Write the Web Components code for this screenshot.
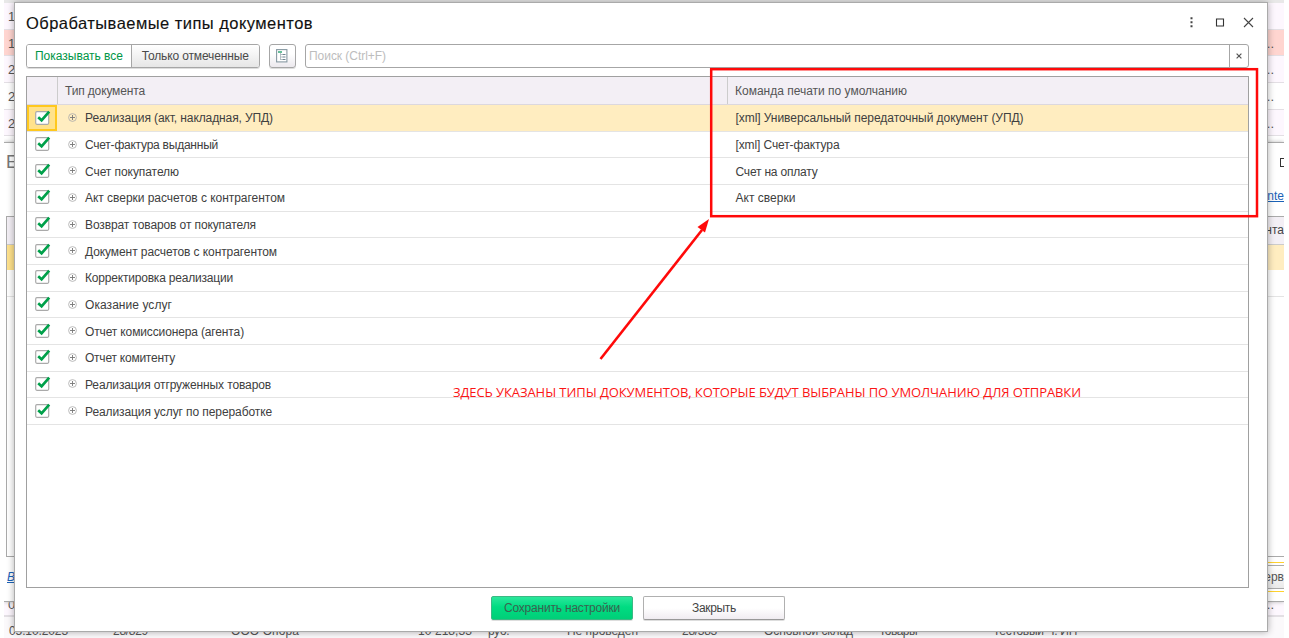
<!DOCTYPE html>
<html lang="ru">
<head>
<meta charset="utf-8">
<title>Обрабатываемые типы документов</title>
<style>
html,body{margin:0;padding:0;background:#fff;overflow:hidden}
body{width:1289px;height:638px;font:12px/16px "Liberation Sans",Arial,sans-serif;color:#444}
</style>
</head>
<body>
<app-desktop></app-desktop>
<script>
const define=(name,html,init)=>customElements.define(name,class extends HTMLElement{
  constructor(){super();this.attachShadow({mode:'open'}).innerHTML=typeof html==='function'?'':html;}
  connectedCallback(){if(typeof html==='function')this.shadowRoot.innerHTML=html(this);if(init)init(this);}
});

/* Text run whose tracking is adjusted to occupy the width given in "w". */
define('fit-text','<style>:host{display:inline-block;white-space:pre;flex:none}span{display:inline-block}</style><span><slot></slot></span>',el=>{
  const s=el.shadowRoot.querySelector('span');
  const fit=()=>{
    s.style.letterSpacing='0px';
    const n=el.textContent.length,w=+el.getAttribute('w'),nat=s.getBoundingClientRect().width;
    if(!n||!w||!nat)return;
    const ls=(w-nat)/n;
    s.style.letterSpacing=ls+'px';
  };
  fit();requestAnimationFrame(fit);
});

define('check-box',`<style>:host{display:block;width:16px;height:16px}svg{display:block}</style>
<svg width="16" height="16" viewBox="0 0 16 16"><rect x=".7" y="1.7" width="13" height="12.6" rx="1.2" fill="#fff" stroke="#aaa" stroke-width="1.2"/><path d="M3.2 7.2 6.6 10.3 14.2 1.6" fill="none" stroke="#00a04a" stroke-width="2.7"/></svg>`);

define('expand-mark',`<style>:host{display:block;width:9px;height:9px}svg{display:block}</style>
<svg width="9" height="9" viewBox="0 0 9 9" fill="none" stroke="#999"><circle cx="4.5" cy="4.5" r="3.9" stroke="#aaa" stroke-width=".8"/><path d="M2 4.5H7M4.5 2V7" stroke="#777" stroke-width=".9"/></svg>`);

define('doc-row',el=>`<style>
:host{display:grid;grid-template-columns:30px 670px 1fr;height:26.66px;box-sizing:border-box;border-bottom:1px solid #e4e4e4;color:#404040;flex:none}
:host([selected]){background:#ffedc0}
.c{padding:4.2px 0 0 8px;box-sizing:border-box}
:host([selected]) .c{background:#ffe28c;border:2px solid #ffc81e;padding:3px 0 0 6px;height:25.6px}
.n{display:flex;align-items:center;padding-left:11px;gap:8px;padding-top:1px}
.n expand-mark{margin-top:-2px}
.p{display:flex;align-items:center;padding-left:8.5px;padding-top:1px}
</style><div class="c"><check-box></check-box></div>
<div class="n"><expand-mark></expand-mark><fit-text w="${el.getAttribute('nw')}">${el.getAttribute('name')}</fit-text></div>
<div class="p">${el.getAttribute('print')?`<fit-text w="${el.getAttribute('pw')}">${el.getAttribute('print')}</fit-text>`:''}</div>`);

const rows=[
['Реализация (акт, накладная, УПД)',188,'[xml] Универсальный передаточный документ (УПД)',288],
['Счет-фактура выданный',133,'[xml] Счет-фактура',104],
['Счет покупателю',94,'Счет на оплату',82],
['Акт сверки расчетов с контрагентом',200,'Акт сверки',60],
['Возврат товаров от покупателя',171],
['Документ расчетов с контрагентом',192],
['Корректировка реализации',148],
['Оказание услуг',87],
['Отчет комиссионера (агента)',159],
['Отчет комитенту',90],
['Реализация отгруженных товаров',186],
['Реализация услуг по переработке',187]];

define('doc-table',`<style>
:host{display:flex;flex-direction:column;border:1px solid #a0a0a0;box-sizing:border-box;background:#fff;overflow:hidden}
.h{display:grid;grid-template-columns:30px 670px 1fr;height:28px;background:#f3eff5;border-bottom:1px solid #dcd8de;box-sizing:border-box;color:#555;margin:0 0 .1px;flex:none}
.h div{display:flex;align-items:center;padding-left:7px;border-left:1px solid #ccc;box-sizing:border-box}
.h div:first-child{border:0}
</style><div class="h"><div></div><div><fit-text w="80">Тип документа</fit-text></div><div><fit-text w="172">Команда печати по умолчанию</fit-text></div></div>
${rows.map((r,i)=>`<doc-row ${i?'':'selected'} name="${r[0]}" nw="${r[1]}" ${r[2]?`print="${r[2]}" pw="${r[3]}"`:''}></doc-row>`).join('')}`);

define('tool-bar',`<style>
:host{display:flex;height:24px;color:#4a4a4a}
.seg{display:flex;width:233.5px;box-sizing:border-box;border:1px solid #a6a6a6;border-radius:3px;box-shadow:0 1px 0 #ddd;overflow:hidden;flex:none}
.seg div{display:flex;align-items:center;justify-content:center}
.a{width:104px;color:#009646;background:#fff}
.b{flex:1;border-left:1px solid #a6a6a6;background:linear-gradient(#fff,#e6e6e6)}
.i{width:27.5px;margin-left:9px;box-sizing:border-box;border:1px solid #a6a6a6;border-radius:3px;background:linear-gradient(#fff 40%,#ece9ee);display:flex;align-items:center;justify-content:center;box-shadow:0 1px 0 #ddd;flex:none}
.s{flex:1;margin-left:9px;border:1px solid #a6a6a6;border-radius:3px;box-sizing:border-box;display:flex;align-items:center;padding-left:3px;color:#bdbdbd;background:#fff}
.x{margin-left:auto;width:18.5px;border-left:1px solid #a6a6a6;align-self:stretch;display:flex;align-items:center;justify-content:center}
</style><div class="seg"><div class="a"><fit-text w="88">Показывать все</fit-text></div><div class="b"><fit-text w="107">Только отмеченные</fit-text></div></div>
<div class="i"><svg width="12" height="14" viewBox="0 0 12 14" fill="none"><rect x=".6" y=".6" width="10.3" height="12.3" fill="#fff" stroke="#8799a3" stroke-width="1.1"/><path d="M2 3h4" stroke="#3fae80" stroke-width="1.6"/><path d="M4.5 4v7M4.5 5.5h2M4.5 8h2M4.5 10.5h2" stroke="#a5b0b6" stroke-width=".8"/><path d="M6.5 5.5h3M6.5 8h3M6.5 10.5h3" stroke="#6e8490" stroke-width="1.1"/></svg></div>
<div class="s"><fit-text w="77">Поиск (Ctrl+F)</fit-text><div class="x"><svg width="6" height="6" viewBox="0 0 6 6"><path d="m.6.6 4.8 4.8M5.4.6.6 5.4" stroke="#555" stroke-width="1.2"/></svg></div></div>`);

define('push-button',`<style>
:host{display:flex;align-items:center;justify-content:center;width:142px;height:24px;box-sizing:border-box;border:1px solid #b0b0b0;border-bottom-color:#999;border-radius:2px;background:linear-gradient(#fff 50%,#f0ecf1);color:#444;box-shadow:0 1px 0 #ddd}
:host([primary]){background:linear-gradient(#2be79b,#00dc82 45%,#00cf78);border-color:#3bb984;color:#3c6250}
</style><slot></slot>`);

define('types-dialog',`<style>
:host{display:flex;flex-direction:column;box-sizing:border-box;background:#fff;border:1px solid #aaa;box-shadow:0 0 7px rgba(0,0,0,.32);padding:0 17.5px 0 11px}
header{display:flex;height:41px;flex:none;align-items:center;color:#111;font-size:16.5px;line-height:20px;padding-bottom:2px;box-sizing:border-box;-webkit-text-stroke:.12px #111}
header svg{margin-left:auto;margin-right:-5px;margin-top:-1px}
doc-table{margin-top:8px;height:512px;flex:none}
footer{display:flex;gap:10px;padding:8px 0 0 465px}
</style><header><fit-text w="287">Обрабатываемые типы документов</fit-text>
<svg width="66" height="14" viewBox="0 0 66 14" fill="none"><path d="M3.5 2.2v2M3.5 6.2v2M3.5 10.2v2" stroke="#444" stroke-width="2"/><path d="M28.5 4h7v7h-7z" stroke="#333" stroke-width="1.1"/><path d="m56 3 9 9M65 3l-9 9" stroke="#444" stroke-width="1.1"/></svg></header>
<tool-bar></tool-bar><doc-table></doc-table>
<footer><push-button primary><fit-text w="116">Сохранить настройки</fit-text></push-button><push-button><fit-text w="44">Закрыть</fit-text></push-button></footer>`);

define('journal-page',`<style>
:host{display:flex;flex-direction:column;box-sizing:border-box;background:#fff;overflow:hidden;color:#555}
.top{height:3px;background:#e8e8e8;flex:none}
.r{display:flex;justify-content:space-between;height:26.7px;flex:none;box-sizing:border-box;border-bottom:1px solid #e3dfe4;background:#fff;padding:6px 10px 0 4px;font-size:13px}
.r.o{background:#fdf7fe}.r.k{background:#ffd5d0}
.gap{height:464.5px;flex:none}
.last{position:relative;height:22px;flex:none;border-top:1px solid #e3dfe4;background:#fbf9fb}
.last fit-text{position:absolute;top:6px}
</style><div class="top"></div>
<div class="r o"><span>1</span></div><div class="r k"><span>1</span><span>..</span></div><div class="r o"><span>2</span><span>..</span></div><div class="r"><span>2</span><span>..</span></div><div class="r o"><span>2</span><span>..</span></div>
<div class="gap"></div><div class="r o" style="height:15px;padding-top:0;line-height:8px"><span>0</span><span>..</span></div>
<div class="last">${[[5,59,'05.10.2023'],[109,35,'28/829'],[227,68,'ООО Опора'],[414,54,'10 218,33'],[484,21,'руб.'],[563,71,'Не проведен'],[678,35,'28/383'],[760,89,'Основной склад'],[875,38,'Товары'],[989,84,'Тестовый Ч. ИП']].map(a=>`<fit-text style="left:${a[0]}px" w="${a[1]}">${a[2]}</fit-text>`).join('')}</div>`);

define('inner-window',`<style>
:host{display:flex;flex-direction:column;box-sizing:border-box;background:#fff;border-top:1px solid #aaa;border-bottom:1px solid #aaa;box-shadow:0 0 4px #bbb;overflow:hidden;clip-path:inset(-5px 0)}
.t{display:flex;justify-content:space-between;height:45px;flex:none;font-size:18px;padding:10px 0 0 2px;box-sizing:border-box;line-height:18px;color:#777}
.t i{width:8px;height:7px;border:1px solid #333;margin:5px -6px 0 0}
.l{height:28px;flex:none;text-align:right;color:#1b62b7;text-decoration:underline}
.g{height:341px;flex:none;box-sizing:border-box;border:1px solid #aaa;border-right:0;margin-left:2px}
.h{height:28px;background:#f3eff5;border-bottom:1px solid #ccc;text-align:right;line-height:27px;box-sizing:border-box}
.y{height:25px;background:linear-gradient(90deg,#ffe28c 50%,#ffedc0 50%)}
.e{height:26px;border-bottom:1px solid #e4e4e4}
.f{display:flex;justify-content:space-between;padding:5px 0 0 3px;color:#1b62b7}
.f em{text-decoration:underline;padding-top:7px}
.f span{border:solid #ffd22e;border-width:1px 0;height:28px;width:50px;display:flex}
.f b{font-weight:400;color:#555;flex:1;text-align:right;margin:2px 0;border:solid #aaa;border-width:1px 0;line-height:22px;background:linear-gradient(#fff,#eaeaea)}
</style><div class="t"><span>Е</span><i></i></div><div class="l">nte</div><div class="g"><div class="h">ента</div><div class="y"></div><div class="e"></div></div>
<div class="f"><em>В</em><span><b>ерв</b></span></div>`);

define('callout-note',`<style>
:host{display:block;pointer-events:none}
svg{position:absolute;left:0;top:0}
fit-text{position:absolute;left:453px;top:383px;color:#fb1515;font:13px/18px "Open Sans","Noto Sans",sans-serif}
</style><svg width="1289" height="638" viewBox="0 0 1289 638"><rect x="711.2" y="69.2" width="545.8" height="147" fill="none" stroke="#ff0909" stroke-width="2.5"/><path d="M600.5 359 702 230" stroke="#ff0909" stroke-width="2.6"/><path d="M709 219 697.5 227 705 232.500Z" fill="#ff0909"/></svg>
<fit-text w="628">ЗДЕСЬ УКАЗАНЫ ТИПЫ ДОКУМЕНТОВ, КОТОРЫЕ БУДУТ ВЫБРАНЫ ПО УМОЛЧАНИЮ ДЛЯ ОТПРАВКИ</fit-text>`);

define('app-desktop',`<style>
:host{display:block;position:relative;width:1289px;height:638px;overflow:hidden}
journal-page,inner-window,types-dialog,callout-note{position:absolute}
journal-page{left:4px;top:0;width:1280px;height:638px}
inner-window{left:4px;top:142px;width:1280px;height:460px}
types-dialog{left:14px;top:2px;width:1253.5px;height:630px}
callout-note{inset:0}
</style><journal-page></journal-page><inner-window></inner-window><types-dialog></types-dialog><callout-note></callout-note>`);
</script>
</body>
</html>
